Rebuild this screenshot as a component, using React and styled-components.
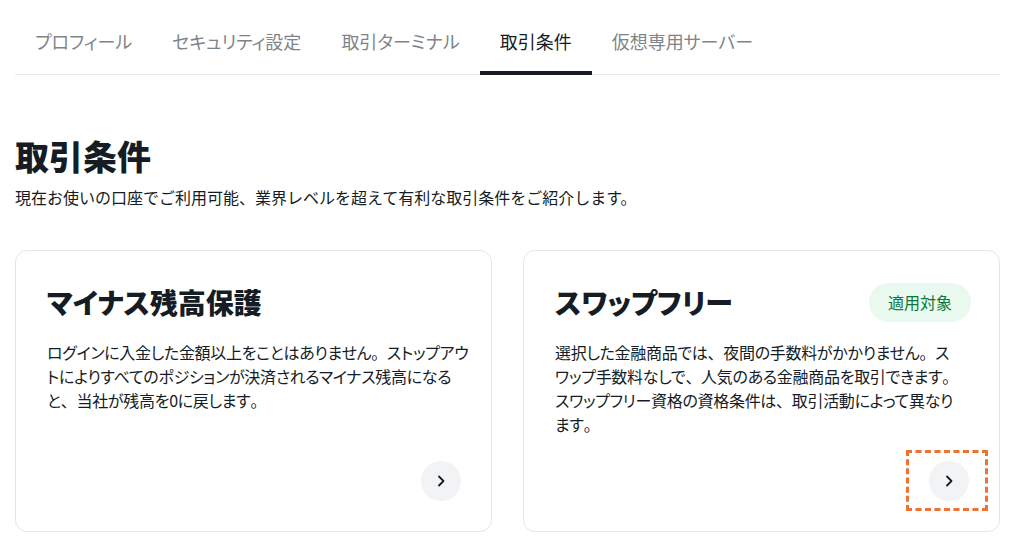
import React from 'react';
import styled, { createGlobalStyle } from 'styled-components';

const GlobalStyle = createGlobalStyle`
  body {
    margin: 0;
    background: #ffffff;
    font-family: "Noto Sans CJK JP", "Noto Sans", sans-serif;
    color: #151c24;
  }
`;

const tabs = ['プロフィール', 'セキュリティ設定', '取引ターミナル', '取引条件', '仮想専用サーバー'];

// lines are kept as in the design so the wrap matches
const cards = [
  {
    title: 'マイナス残高保護',
    lines: [
      'ログインに入金した金額以上をことはありません。ストップアウ',
      'トによりすべてのポジションが決済されるマイナス残高になる',
      'と、当社が残高を0に戻します。',
    ],
  },
  {
    title: 'スワップフリー',
    badge: '適用対象',
    lines: [
      '選択した金融商品では、夜間の手数料がかかりません。ス',
      'ワップ手数料なしで、人気のある金融商品を取引できます。',
      'スワップフリー資格の資格条件は、取引活動によって異なり',
      'ます。',
    ],
    marked: true,
  },
];

// keep 、。 full width while kana stay proportional
const withPunct = (line) =>
  line.split(/([、。])/).map((part, i) =>
    part === '、' || part === '。' ? <Punct key={i}>{part}</Punct> : part
  );

const Chevron = () => (
  <svg width="16" height="16" viewBox="0 0 16 16" fill="none">
    <path d="M6 3.5 L10.5 8 L6 12.5" stroke="#151c24" strokeWidth="1.8" strokeLinecap="round" strokeLinejoin="round" />
  </svg>
);

const App = () => {
  return (
    <Page>
      <GlobalStyle />
      <TabBar>
        {tabs.map((t) => (
          <Tab key={t} $active={t === '取引条件'}>{t}</Tab>
        ))}
      </TabBar>

      <Heading>取引条件</Heading>
      <Lead>現在お使いの口座でご利用可能、業界レベルを超えて有利な取引条件をご紹介します。</Lead>

      <CardGrid>
        {cards.map((c) => (
          <Card key={c.title}>
            <CardHead>
              <CardTitle>{c.title}</CardTitle>
              {c.badge && <Badge>{c.badge}</Badge>}
            </CardHead>
            <CardText>
              {c.lines.map((l, i) => (
                <Line key={i}>{withPunct(l)}</Line>
              ))}
            </CardText>
            <CardFoot>
              <ArrowButton $marked={c.marked}>
                <Chevron />
              </ArrowButton>
            </CardFoot>
          </Card>
        ))}
      </CardGrid>
    </Page>
  );
};

const Page = styled.div`
  padding: 10px 10px 0 15px;
`;

const TabBar = styled.div`
  display: flex;
  border-bottom: 1px solid #e6e7e9;
`;

const Tab = styled.div`
  height: 61px;
  padding: 0 20px;
  display: flex;
  align-items: center;
  font-size: 18px;
  font-feature-settings: "palt";
  color: ${(p) => (p.$active ? '#151c24' : '#7f848a')};
  border-bottom: 4px solid ${(p) => (p.$active ? '#151c24' : 'transparent')};
  margin-bottom: -1px;
`;

const Heading = styled.h1`
  margin: 58px 0 0;
  font-size: 34px;
  line-height: 46px;
  font-weight: 900;
`;

const Lead = styled.p`
  margin: 6px 0 0;
  font-size: 16px;
  line-height: 24px;
`;

const CardGrid = styled.div`
  display: grid;
  grid-template-columns: repeat(2, minmax(0, 1fr));
  gap: 31px;
  margin-top: 41px;
`;

const Card = styled.div`
  min-width: 0;
  border: 1px solid #e4e5e7;
  border-radius: 12px;
  padding: 31px 30px 30px 31px;
  height: 282px;
  box-sizing: border-box;
  display: flex;
  flex-direction: column;
`;

const CardHead = styled.div`
  display: flex;
  align-items: center;
  justify-content: space-between;
  min-height: 40px;
`;

const CardTitle = styled.h2`
  margin: 0;
  font-size: 28px;
  line-height: 40px;
  font-weight: 900;
  font-feature-settings: "palt";
`;

const Badge = styled.span`
  background: #e9f9f0;
  color: #0b773b;
  font-size: 16px;
  line-height: 25px;
  padding: 7px 19px;
  margin-right: -2px;
  border-radius: 20px;
`;

const CardText = styled.div`
  margin-top: 18px;
  font-size: 16px;
  line-height: 24px;
  letter-spacing: -0.3px;
  font-feature-settings: "palt";
`;

const Line = styled.div`
  white-space: nowrap;
`;

const Punct = styled.span`
  font-feature-settings: normal;
`;

const CardFoot = styled.div`
  margin-top: auto;
  display: flex;
  justify-content: flex-end;
`;

const ArrowButton = styled.div`
  position: relative;
  width: 40px;
  height: 40px;
  border-radius: 50%;
  background: #f2f3f5;
  display: flex;
  align-items: center;
  justify-content: center;

  &::after {
    content: "";
    display: ${(p) => (p.$marked ? 'block' : 'none')};
    position: absolute;
    left: -23px;
    top: -11px;
    width: 82px;
    height: 61px;
    box-sizing: border-box;
    border: 3px dashed #ec7331;
  }
`;

export default App;
